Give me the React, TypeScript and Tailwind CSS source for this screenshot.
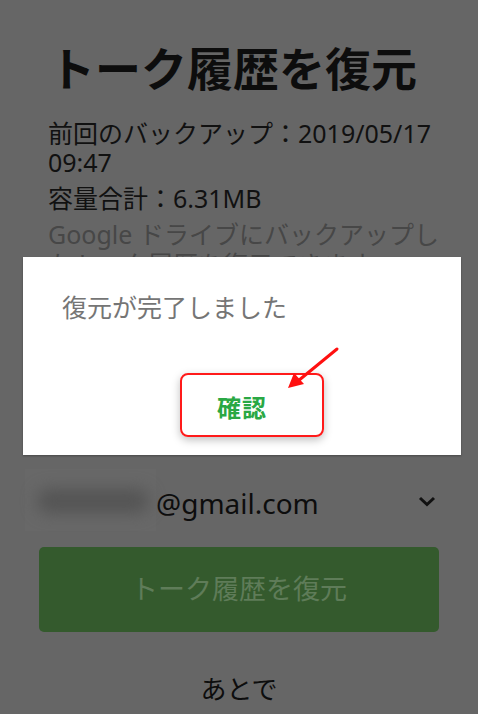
export default function App() {
  return (
    <div
      className="relative h-[714px] w-full overflow-hidden bg-[#666666]"
      style={{ fontFamily: '"Noto Sans", "Noto Sans CJK JP", sans-serif' }}
    >
      {/* screen behind the dialog */}
      <div className="flex flex-col pl-[48px] pr-[28px] pt-[38px]">
        <h1 className="ml-[1px] text-[46px] font-bold leading-[60px] text-[#0d0d0d]">
          トーク履歴を復元
        </h1>
        <p className="mt-[21px] text-[25px] leading-[29px] text-[#111111]">
          前回のバックアップ：2019/05/17 09:47
        </p>
        <p className="mt-[6px] text-[25px] leading-[30px] text-[#111111]">容量合計：6.31MB</p>
        <p className="mt-[6px] text-[25px] leading-[30px] text-[#474747]">
          Google ドライブにバックアップしたトーク履歴を復元できます。
        </p>
      </div>

      <div className="absolute left-0 right-0 top-[469px] flex flex-col">
        <div className="flex h-[62px] items-center pl-[25px] pr-[40px]">
          <div className="relative h-[62px] w-[131px] bg-[#686868]">
            <div className="absolute left-[12px] top-[20px] h-[24px] w-[112px] rounded-full bg-[#545454] blur-[8px]" />
          </div>
          <span className="mt-[6px] text-[28px] text-[#0d0d0d]">@gmail.com</span>
          <svg className="ml-auto mt-[2px]" width="22" height="14" viewBox="0 0 22 14">
            <path d="M4 4 L11 10.5 L18 4" fill="none" stroke="#111" strokeWidth="3" />
          </svg>
        </div>
        <div className="mx-[39px] mt-[16px] flex h-[85px] items-center justify-center rounded-[5px] bg-[#345a2d]">
          <span className="text-[27px] text-[#5f7c59]">トーク履歴を復元</span>
        </div>
        <div className="mt-[38px] flex justify-center">
          <span className="text-[26px] text-[#0d0d0d]">あとで</span>
        </div>
      </div>

      {/* dialog */}
      <div className="absolute left-[23px] top-[257px] flex h-[198px] w-[438px] flex-col bg-white shadow-[0_1px_2px_rgba(0,0,0,0.3)]">
        <p className="ml-[39px] mt-[35px] text-[25px] leading-[30px] text-[#757575]">復元が完了しました</p>
        <div className="mt-[68px] flex justify-center">
          <span className="text-[24px] font-bold tracking-[1px] text-[#2aa844]">確認</span>
        </div>
      </div>

      {/* annotation */}
      <div className="absolute left-[180px] top-[373px] h-[64px] w-[144px] rounded-[8px] border-2 border-[#ff1a1a] shadow-[0_3px_8px_rgba(0,0,0,0.25)]" />
      <svg className="absolute left-[280px] top-[340px]" width="66" height="56" viewBox="0 0 66 56">
        <path d="M57 9 L18 41" stroke="#ff1010" strokeWidth="3" strokeLinecap="round" />
        <path d="M8 48 L14 33 L24 44 Z" fill="#ff1010" />
      </svg>
    </div>
  );
}
